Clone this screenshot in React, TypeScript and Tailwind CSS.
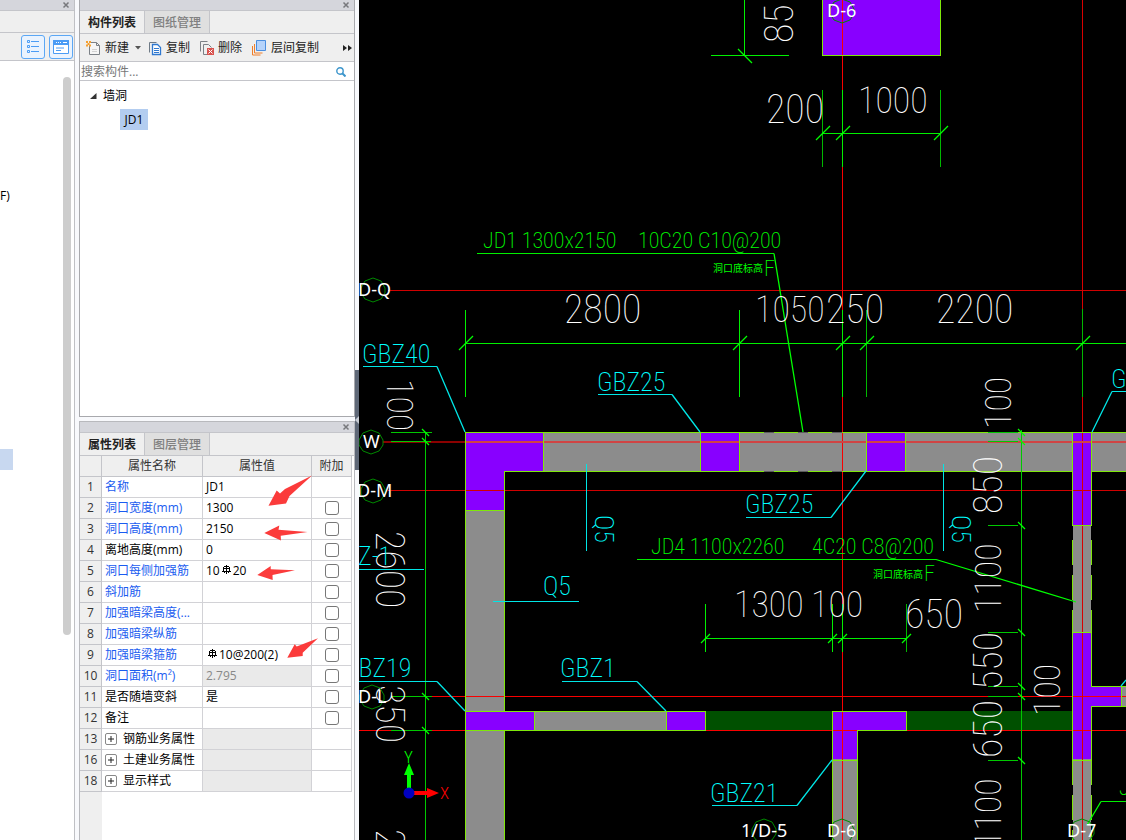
import { ReactNode } from "react";

type Row = { no: number; name: string; value?: ReactNode; blue?: boolean; check?: boolean; gray?: boolean; group?: boolean };

const Rebar = () => (
  <svg width="9" height="9" viewBox="0 0 9 9" className="mx-0.5 inline-block align-[1px]" fill="none" stroke="#000" shapeRendering="crispEdges">
    <path d="M4.5 0v9M0 6.5h9M1 3.5h7M2 1.5h5M1.5 2v4M7.5 2v4M2.5 7v1M6.5 7v1" />
  </svg>
);

const ROWS: Row[] = [
  { no: 1, name: "名称", value: "JD1", blue: true },
  { no: 2, name: "洞口宽度(mm)", value: "1300", blue: true, check: true },
  { no: 3, name: "洞口高度(mm)", value: "2150", blue: true, check: true },
  { no: 4, name: "离地高度(mm)", value: "0", check: true },
  { no: 5, name: "洞口每侧加强筋", value: <>10<Rebar />20</>, blue: true, check: true },
  { no: 6, name: "斜加筋", blue: true, check: true },
  { no: 7, name: "加强暗梁高度(...", blue: true, check: true },
  { no: 8, name: "加强暗梁纵筋", blue: true, check: true },
  { no: 9, name: "加强暗梁箍筋", value: <><Rebar />10@200(2)</>, blue: true, check: true },
  { no: 10, name: "洞口面积(m²)", value: "2.795", blue: true, check: true, gray: true },
  { no: 11, name: "是否随墙变斜", value: "是", check: true },
  { no: 12, name: "备注", check: true },
  { no: 13, name: "钢筋业务属性", gray: true, group: true },
  { no: 16, name: "土建业务属性", gray: true, group: true },
  { no: 18, name: "显示样式", gray: true, group: true },
];

function TitleBar({ label }: { label: string }) {
  return (
    <div className="flex h-[11px] shrink-0 items-center justify-end border-b border-[#c4c5ca] bg-[#d5d6dc] pr-1">
      <button aria-label={label} className="flex">
        <svg width="8" height="8" viewBox="0 0 8 8" stroke="#77787c" strokeWidth="1.5">
          <path d="M1.5 1.5l5 5M6.5 1.5l-5 5" />
        </svg>
      </button>
    </div>
  );
}

function Tabs({ items }: { items: string[] }) {
  return (
    <div role="tablist" className="flex h-[23px] shrink-0 border-b border-[#c4c5ca] bg-[#efefef]">
      <button role="tab" aria-selected="true" className="w-[65px] border-r border-[#c4c5ca] pt-0.5 font-bold text-[#222]">
        {items[0]}
      </button>
      <button role="tab" aria-selected="false" className="w-[65px] border-r border-[#c4c5ca] bg-[#dfdfdf] pt-0.5 font-medium text-[#808080]">
        {items[1]}
      </button>
    </div>
  );
}

function Sidebar() {
  return (
    <aside className="flex w-[75px] shrink-0 flex-col border-r border-[#bfc0c4] bg-white">
      <TitleBar label="关闭导航" />
      <div className="h-[22px] shrink-0 border-b border-[#c4c5ca] bg-[#efefef]" />
      <div className="flex h-7 shrink-0 items-center justify-end gap-1 border-b border-[#c4c5ca] bg-[#efefef] pr-px">
        <button aria-label="列表" className="flex size-6 items-center justify-center rounded-[3px] border border-[#5ba7f5] bg-[#eaf3fe]">
          <svg width="14" height="14" viewBox="0 0 14 14" fill="none" stroke="#4b9cf5">
            <path d="M1.5.5h2v2h-2zM1.5 5.5h2v2h-2zM1.5 10.5h2v2h-2zM5 1.5h8M5 6.5h8M5 11.5h8" />
          </svg>
        </button>
        <button aria-label="窗口" className="flex size-6 items-center justify-center rounded-[3px] border border-[#5ba7f5] bg-[#eaf3fe]">
          <svg width="16" height="14" viewBox="0 0 16 14">
            <path d="M.5.5h15v13H.5z" fill="#fff" stroke="#4b9cf5" />
            <path d="M0 0h16v5H0z" fill="#4b9cf5" />
            <path d="M3 2.5h1M5 2.5h1M7 2.5h1M10 2.5h4" stroke="#fff" />
            <path d="M3 8h8M3 10.5h5" stroke="#4b9cf5" />
          </svg>
        </button>
      </div>
      <div className="flex flex-1 justify-between overflow-hidden pr-[3px]">
        <div className="flex flex-col pt-[125px]">
          <div className="h-5 leading-5">F)</div>
          <div className="mt-[243px] h-[21px] w-[13px] bg-[#c8d8f0]" />
        </div>
        <div className="mt-4 h-[558px] w-2 rounded-full bg-[#cdcdcd]" />
      </div>
    </aside>
  );
}

function ComponentPanel() {
  return (
    <section className="flex h-[417px] shrink-0 flex-col border-x border-b border-[#a8a9ad] bg-white">
      <TitleBar label="关闭构件列表" />
      <Tabs items={["构件列表", "图纸管理"]} />
      <div className="flex h-7 shrink-0 items-center border-b border-[#c4c5ca] bg-[#efefef] pt-px pl-1.5 text-[#222]">
        <button className="flex items-center gap-1">
          <svg width="15" height="15" viewBox="0 0 15 15" fill="none">
            <path d="M4.5 1.5h6l3 3v9h-10V5" fill="#f6f6f6" stroke="#7c8187" />
            <path d="M10.5 1.5v3h3" stroke="#7c8187" />
            <path d="M6 8.5h5M6 10.5h5" stroke="#d2d2d2" />
            <path d="M0 0h2v2H0zM3 0h2v2H3zM1.5 2h2v2h-2zM0 3.5h2v2H0zM3 3.5h2v2H3z" fill="#f5a030" />
          </svg>
          新建
        </button>
        <svg width="6" height="4" viewBox="0 0 6 4" className="ml-1.5" fill="#555"><path d="M0 0h6L3 3.5z" /></svg>
        <button className="ml-1.5 flex items-center gap-1">
          <svg width="15" height="15" viewBox="0 0 15 15" fill="none">
            <path d="M2.5 11.5v-10h7" stroke="#6f7a86" />
            <path d="M5.500 3.500h5l3 3v7h-8z" fill="#fff" stroke="#2f78d0" strokeWidth="1.300" />
            <path d="M7 7.500h5M7 9.500h5M7 11.500h5" stroke="#2f78d0" />
          </svg>
          复制
        </button>
        <button className="ml-2.5 flex items-center gap-1">
          <svg width="14" height="15" viewBox="0 0 14 15" fill="none">
            <path d="M.5 10.500v-10h7M7 13.500H3.500v-10h5l3 3" stroke="#7c8187" />
            <path d="M7 7h7v7H7z" fill="#d9534f" />
            <path d="M8.500 8.500l4 4M12.500 8.500l-4 4" stroke="#fff" />
          </svg>
          删除
        </button>
        <button className="ml-2.5 flex items-center gap-1">
          <svg width="15" height="16" viewBox="0 0 15 16" fill="none">
            <path d="M.5 6v9h8M2.500 4v9h8" stroke="#ef7f2b" />
            <path d="M4.500.5h9v10h-9z" fill="#b5d3fb" stroke="#4b8fe0" />
          </svg>
          层间复制
        </button>
        <button aria-label="更多" className="mr-0.5 ml-auto">
          <svg width="9" height="6" viewBox="0 0 9 6" fill="#222"><path d="M0 0l4 3-4 3zM5 0l4 3-4 3z" /></svg>
        </button>
      </div>
      <label className="flex h-[19px] shrink-0 items-center border-b border-[#c4c5ca] pt-0.5 pr-2 pl-px">
        <input aria-label="搜索构件" placeholder="搜索构件..." className="min-w-0 flex-1 outline-none placeholder:text-[#777]" />
        <svg width="10" height="10" viewBox="0 0 10 10" fill="none" stroke="#3d96cc" strokeWidth="1.400">
          <circle cx="4" cy="4" r="3.200" /><path d="M6.500 6.500l3 3" strokeWidth="2" />
        </svg>
      </label>
      <ul className="pt-1 pl-2.5">
        <li>
          <div className="flex h-[21px] items-center gap-1.5">
            <svg width="7" height="6" viewBox="0 0 7 6" fill="#333"><path d="M6.500 0v6H0z" /></svg>
            墙洞
          </div>
          <ul className="pt-[3px] pl-[30px]">
            <li className="flex h-[21px] w-7 items-center justify-center bg-[#b3cdf0]">JD1</li>
          </ul>
        </li>
      </ul>
    </section>
  );
}

function PropertyPanel() {
  return (
    <section className="relative mt-1 flex flex-1 flex-col overflow-hidden border-x border-t border-[#b8b9bd] bg-white">
      <TitleBar label="关闭属性列表" />
      <Tabs items={["属性列表", "图层管理"]} />
      <table className="w-[272px] table-fixed border-separate border-spacing-0">
        <colgroup>
          <col className="w-[22px]" />
          <col className="w-[101px]" />
          <col className="w-[109px]" />
          <col className="w-10" />
        </colgroup>
        <thead>
          <tr className="h-[21px] bg-[#efefef] text-[#333]">
            {["", "属性名称", "属性值", "附加"].map((h, i) => (
              <th key={i} className="border-r border-b border-[#c4c5ca] p-0 leading-5 font-normal">{h}</th>
            ))}
          </tr>
        </thead>
        <tbody>
          {ROWS.map((r) => (
            <tr key={r.no} className="h-[21px]">
              <td className="border-r border-b border-[#c4c5ca] bg-[#efefef] p-0 text-center leading-5 text-[#333]">{r.no}</td>
              <td className={`border-r border-b border-[#d2d2d6] p-0 pl-[3px] leading-5 whitespace-nowrap ${r.blue ? "text-[#1a5cf0]" : "text-black"}`}>
                {r.group ? (
                  <span className="flex h-5 items-center gap-1.5">
                    <button aria-label={`展开${r.name}`} className="flex size-3 items-center justify-center rounded-[2px] border border-[#888]">
                      <svg width="6" height="6" viewBox="0 0 6 6" stroke="#222"><path d="M0 3h6M3 0v6" /></svg>
                    </button>
                    {r.name}
                  </span>
                ) : r.name}
              </td>
              <td className={`border-r border-b border-[#d2d2d6] p-0 pl-[3px] leading-5 whitespace-nowrap ${r.gray ? "bg-[#eaeaea] text-[#888]" : ""}`}>
                {r.value}
              </td>
              <td className="border-r border-b border-[#d2d2d6] p-0">
                {r.check && (
                  <input type="checkbox" aria-label={`${r.name} 附加`} className="mx-auto block size-3.5 appearance-none rounded-[3px] border border-[#777] bg-white" />
                )}
              </td>
            </tr>
          ))}
        </tbody>
      </table>
      <div className="w-[22px] flex-1 bg-[#efefef]" />

      {/* red marker arrows */}
      <svg className="pointer-events-none absolute top-0 left-0" width="274" height="300" viewBox="80 422 274 300" fill="#fb3b3b">
        <path d="M312 475.500L289.500 496 286 503.500 268.500 505.700 276.700 490.500 280 493.500 285 489z" />
        <path d="M307.500 532L280.700 535.700 281 540.500 264.300 533 279.300 525.500 278.500 529.700z" />
        <path d="M295 570.300L272.500 575 272.700 580 257.300 575 270.700 566V569.300z" />
        <path d="M318 638.300L302.700 652.700 302.700 656 287.300 657.700 294.700 644.300 296.700 646.500z" />
      </svg>
    </section>
  );
}

const GREEN = "#00f000";
const CYAN = "#00e6e6";
const EDGE = "#7fe80a";

// lettering of the drawing: [text, x, y, rotation]
type Label = [string, number, number, number?];

const DIMS: Label[] = [
  ["85", 793, 43, -90], ["200", 766, 123], ["2800", 564, 323], ["250", 826, 323], ["2200", 936, 323],
  ["2600", 376, 531, 90], ["350", 376, 685, 90], ["2600", 376, 829, 90], ["650", 905, 628],
  ["850", 1002, 514, -90], ["550", 1002, 690, -90], ["650", 1002, 758, -90],
];

// dimensions that hold narrow ones
const DIMS_SMALL: Label[] = [
  ["1000", 858, 113], ["1050", 755, 322], ["100", 387, 379, 90], ["1300", 734, 617], ["100", 811, 617],
  ["100", 1011, 429, -90], ["1100", 1001, 613, -90], ["1100", 1001, 848, -90], ["100", 1060, 716, -90],
];

const MARKS: Label[] = [
  ["GBZ40", 362, 363], ["GBZ25", 597, 391], ["GBZ25", 745, 513], ["GBZ19", 343, 677], ["GBZ1", 560, 677],
  ["GBZ21", 710, 802], ["Q5", 543, 595], ["Q5", 595, 515, 90], ["Q5", 952, 515, 90], ["Z-1", 358, 565], ["GBZ", 1111, 388],
];

const NOTES: Label[] = [
  ["JD1 1300x2150", 483, 248], ["10C20 C10@200", 638, 248], ["JD4 1100x2260", 651, 554], ["4C20 C8@200", 812, 554],
  ["F", 764, 276], ["F", 924, 581], ["J", 1119, 795],
];

// [label, text x, bubble x, bubble y]
const AXES: [string, number, number, number][] = [
  ["D-6", 827, 842, 11], ["D-Q", 358, 373, 290], ["W", 363, 371, 442], ["D-M", 357, 373, 491],
  ["D-L", 358, 372, 697], ["1/D-5", 741, 764, 831], ["D-6", 827, 842, 831], ["D-7", 1067, 1082, 831],
];

const TICKS_UP: [number, number][] = [
  [822, 133], [842, 133], [940, 133], [465, 343], [739, 343], [842, 343], [866, 343], [1082, 343],
];
const TICKS_LOW: [number, number][] = [[705, 638], [832, 638], [842, 638], [906, 638]];
const TICKS_SIDE: [number, number][] = [
  [425, 432], [425, 441], [425, 696], [425, 730], [1021, 432], [1021, 441], [1021, 525],
  [1021, 632], [1021, 686], [1021, 696], [1021, 760],
];

function Labels({ items }: { items: Label[] }) {
  return (
    <>
      {items.map(([t, x, y, r], i) => (
        <text key={i} x={x} y={y} transform={r ? `rotate(${r} ${x} ${y})` : undefined}>{t}</text>
      ))}
    </>
  );
}

function Drawing() {
  return (
    <main className="min-w-0 flex-1 overflow-hidden bg-black">
      <svg className="block h-full w-full" viewBox="359 0 767 840" preserveAspectRatio="xMinYMin slice" fill="none">
        {/* walls */}
        <path fill="#8c8c8c" d="M543 432H1126V471H543zM465 510H505V840H465zM534 711H667V730H534zM832 759H857V840H832zM1073 525H1091V840H1073zM1121 687H1126V706H1121z" />
        <path fill="#005000" d="M706 711H1073V730H706z" />
        <path fill="#8800ff" d="M822 0H940V55H822zM465 432H543V471H504V510H465zM701 432H739V471H701zM867 432H905V471H867zM1073 432H1091V525H1073zM465 711H534V730H465zM667 711H705V730H667zM832 711H906V730H857V759H832zM1073 632H1091V686H1121V706H1091V759H1073z" />

        {/* axis lines */}
        <g shapeRendering="crispEdges">
          <path stroke="#d00000" d="M388 290.500H1126M388 490.500H1126" />
          <path stroke="#f80000" d="M391 696.500H1126M359 730.500H1126M842.500 0V840" />
          <path stroke="#d80000" d="M1082.500 0V840" />
          <path stroke="#8b0000" strokeWidth="2" d="M383 442H465" />
          <path stroke="#d04444" strokeWidth="2" d="M465 442H1126" />
        </g>

        {/* wall outlines */}
        <g stroke={EDGE} shapeRendering="crispEdges">
          <path d="M822.500 0V55.500H940.500V0M465.500 840V432.500H1126M504.500 711V471.500H1072M465.500 510.500H504.500M504.500 730V840M543.500 432V471M700.500 432V471M739.500 432V471M866.500 432V471M905.500 432V471M1091.500 471.500H1126" />
          <path d="M465.500 711.500H705.500V730.500H465.500M534.500 711V730M666.500 711V730M832.500 840V711.500H906.500V730.500H857.500V840M832.500 760.500H857" />
          <path d="M1072.500 432V525.500H1091.500V432M1072.500 760.500V632.500H1091.500V686.500H1126M1126 706.500H1091.500V760.500H1072.500M1121.500 686V706" />
          <path strokeDasharray="25 10" d="M1072.500 540V632M1091.500 540V632M1072.500 760V840M1091.500 760V840" />
          <path stroke="#5c5c5c" d="M764 432.500H774M798 432.500H808M832 432.500H842M764 471.500H774M798 471.500H808M832 471.500H842" />
        </g>

        {/* dimension lines */}
        <g stroke={GREEN} shapeRendering="crispEdges">
          <path d="M744.500 0V55M711 55.500H789M822 133.500H940M842.500 90V167M465 343.500H1126M465.500 310V397M739.500 310V397M842.500 310V397M705 638.500H906M705.500 604V652M832.500 604V652M842.500 604V652" />
          <path stroke="#00b800" d="M822.500 90V167M940.500 90V167M866.500 310V397M1082.500 309V397M906.500 604V652" />
          <path stroke="#00c800" d="M425.500 432V840M1021.500 430V840M391 432.500H432M391 441.500H431M391 696.500H432M391 730.500H432M988 432.500H1018M988 441.500H1018M988 525.500H1018M988 632.500H1018M988 686.500H1018M988 696.500H1018M988 760.500H1018" />
          <path d="M477 253.500H774M637 559.500H936M1101 801.500H1126" />
        </g>
        <g stroke="#00ff00" strokeWidth="1.300">
          {TICKS_UP.map(([x, y], i) => <path key={i} d={`M${x - 6} ${y + 7}l14 -14`} />)}
          {TICKS_LOW.map(([x, y], i) => <path key={i} d={`M${x - 4} ${y + 5}l9 -9`} />)}
          {TICKS_SIDE.map(([x, y], i) => <path key={i} d={`M${x - 3} ${y - 3}l7 7`} />)}
          <path d="M738 49l14 14M774 253.500L803 432M936 559.500L1076 602M1101 801.500L1087 825" />
        </g>

        {/* leaders */}
        <g stroke={CYAN}>
          <path shapeRendering="crispEdges" d="M363 366.500H437M598 394.500H672M746 517.500H831M359 681.500H437M562 681.500H637M712 805.500H797M493 601.500H579M586.500 464V551M943.500 464V551M359 569.500H424M1112 391.500H1126" />
          <path strokeWidth="1.300" d="M437 366.500L465 432M672 394.500L700 432M831 517.500L866 471M437 681.500L465 711M637 681.500L666 711M797 805.500L832 760M1112 391.500L1092 432M1121 686L1126 680" />
        </g>

        <g className="font-['Roboto_Condensed','Liberation_Sans',sans-serif] font-thin">
          <g fill="#fff" className="text-[40px]"><Labels items={DIMS} /></g>
          <g fill="#fff" className="text-[36px]"><Labels items={DIMS_SMALL} /></g>
          <g fill="#00ffff" className="text-[26px] font-extralight"><Labels items={MARKS} /></g>
          <g fill="#00ff00" className="text-[22px] font-extralight"><Labels items={NOTES} /></g>
        </g>
        <g fill="#00ff00" className="text-[10px]">
          <text x="713" y="272">洞口底标高</text>
          <text x="873" y="578">洞口底标高</text>
        </g>

        {/* axis bubbles */}
        {AXES.map(([t, tx, x, y], i) => (
          <g key={i}>
            <path stroke="#008a00" d={`M${x} ${y - 12}l8 3 4 7v5l-4 6 -8 3 -8 -3 -4 -6v-5l4 -7z`} />
            <text x={tx} y={y + 6} fill="#fff" className="font-['Noto_Sans',sans-serif] text-[18px]">{t}</text>
          </g>
        ))}

        {/* UCS icon */}
        <path fill="#00ff00" d="M407 775V790H411V775H414L409 763 404 775z" />
        <path fill="#ff0000" d="M413 791V795H427V798L439 793 427 788V791z" />
        <circle cx="409" cy="793" r="5.500" fill="#0000c0" />
        <g className="font-['Roboto_Condensed',sans-serif] text-[17px] font-light">
          <text x="404" y="763" fill="#00ff00">Y</text>
          <text x="440" y="799" fill="#ff0000">X</text>
        </g>
      </svg>
    </main>
  );
}

export default function App() {
  return (
    <div className="flex h-screen overflow-hidden bg-[#f8f9fc] font-['Open_Sans','Noto_Sans_CJK_SC',sans-serif] text-[12px] leading-4 text-black">
      <Sidebar />
      <div className="ml-1 flex w-[276px] shrink-0 flex-col">
        <ComponentPanel />
        <PropertyPanel />
      </div>
      <div className="flex w-1 shrink-0 flex-col justify-center">
        <div className="flex h-[100px] items-center bg-[#5f6877]">
          <svg width="4" height="8" viewBox="0 0 4 8" fill="#c8ccd4"><path d="M4 0v8L0 4z" /></svg>
        </div>
      </div>
      <Drawing />
    </div>
  );
}
